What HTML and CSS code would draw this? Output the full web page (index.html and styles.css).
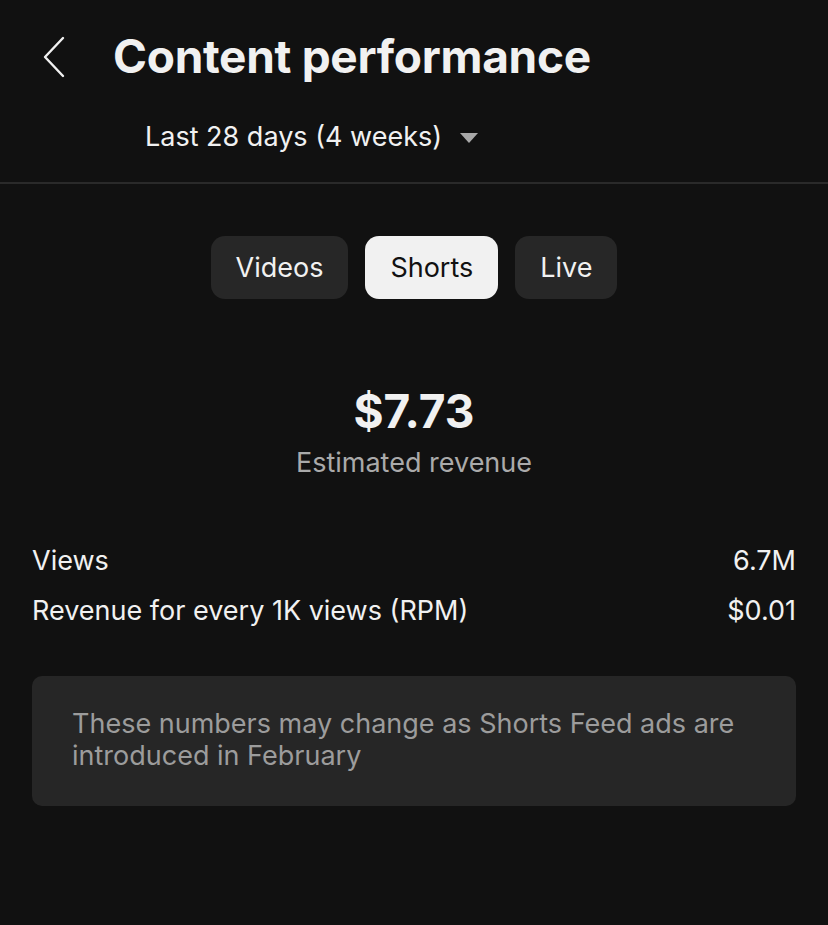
FILE: index.html
```html
<!DOCTYPE html>
<html lang="en">

<head>
  <meta charset="UTF-8">
  <meta name="viewport" content="width=device-width, initial-scale=1.0">
  <title>Content performance</title>
  <link rel="stylesheet" href="styles.css">
</head>

<body>
  <header class="top-bar">
    <div class="title-row">
      <button class="back-btn" aria-label="Back">
        <svg width="26" height="42" viewBox="0 0 26 42">
          <path d="M22 2 L4 21 L22 40" fill="none" stroke="#f1f1f1" stroke-width="2.4" stroke-linecap="round" stroke-linejoin="round" />
        </svg>
      </button>
      <h1 class="page-title">Content performance</h1>
    </div>
    <button class="range-picker">
      <span>Last 28 days (4 weeks)</span>
      <svg width="20" height="12" viewBox="0 0 20 12">
        <path d="M1 1 H19 L10 11 Z" fill="#a8a8a8" />
      </svg>
    </button>
  </header>

  <main class="content">
    <nav class="tabs">
      <button class="tab">Videos</button>
      <button class="tab active">Shorts</button>
      <button class="tab">Live</button>
    </nav>

    <section class="summary">
      <div class="summary-value">$7.73</div>
      <div class="summary-label">Estimated revenue</div>
    </section>

    <dl class="stats">
      <div class="stat-row">
        <dt>Views</dt>
        <dd>6.7M</dd>
      </div>
      <div class="stat-row">
        <dt>Revenue for every 1K views (RPM)</dt>
        <dd>$0.01</dd>
      </div>
    </dl>

    <div class="notice">
      These numbers may change as Shorts Feed ads are introduced in February
    </div>
  </main>
</body>

</html>
```

FILE: styles.css
```css
*,
*::before,
*::after {
  box-sizing: border-box;
}

body {
  margin: 0;
  min-height: 100vh;
  font-family: Inter, 'Noto Sans', Arial, sans-serif;
  color: #f1f1f1;
  background-color: #111111;
}

button {
  font: inherit;
  color: inherit;
  border: none;
  background: none;
  padding: 0;
}

.top-bar {
  border-bottom: 2px solid #2a2a2a;
  padding-bottom: 20px;
}

.title-row {
  display: flex;
  align-items: center;
  height: 112px;
  padding-left: 41px;
}

.back-btn {
  display: flex;
  width: 72px;
  margin-top: 2px;
}

.page-title {
  margin: 0;
  font-size: 46px;
  font-weight: 700;
  letter-spacing: -0.3px;
}

.range-picker {
  display: flex;
  align-items: center;
  gap: 17px;
  margin-left: 145px;
  font-size: 27px;
  line-height: 50px;
}

.range-picker svg {
  margin-top: 2px;
}

.content {
  padding: 52px 32px 0;
}

.tabs {
  display: flex;
  justify-content: center;
  gap: 17px;
}

.tab {
  height: 63px;
  padding: 0 25px;
  border-radius: 14px;
  font-size: 27px;
  background-color: #272727;
}

.tab.active {
  color: #111111;
  background-color: #f1f1f1;
}

.summary {
  margin-top: 84px;
  text-align: center;
}

.summary-value {
  font-size: 46px;
  font-weight: 700;
  line-height: 56px;
}

.summary-label {
  margin-top: 6px;
  font-size: 27px;
  line-height: 36px;
  color: #aaaaaa;
}

.stats {
  margin: 55px 0 0;
}

.stat-row {
  display: flex;
  justify-content: space-between;
  font-size: 27px;
  line-height: 50px;
}

.stat-row dt,
.stat-row dd {
  margin: 0;
}

.notice {
  margin-top: 40px;
  padding: 32px 40px 32px;
  border-radius: 10px;
  font-size: 27px;
  line-height: 32px;
  color: #9c9c9c;
  background-color: #262626;
  min-height: 130px;
}
```
